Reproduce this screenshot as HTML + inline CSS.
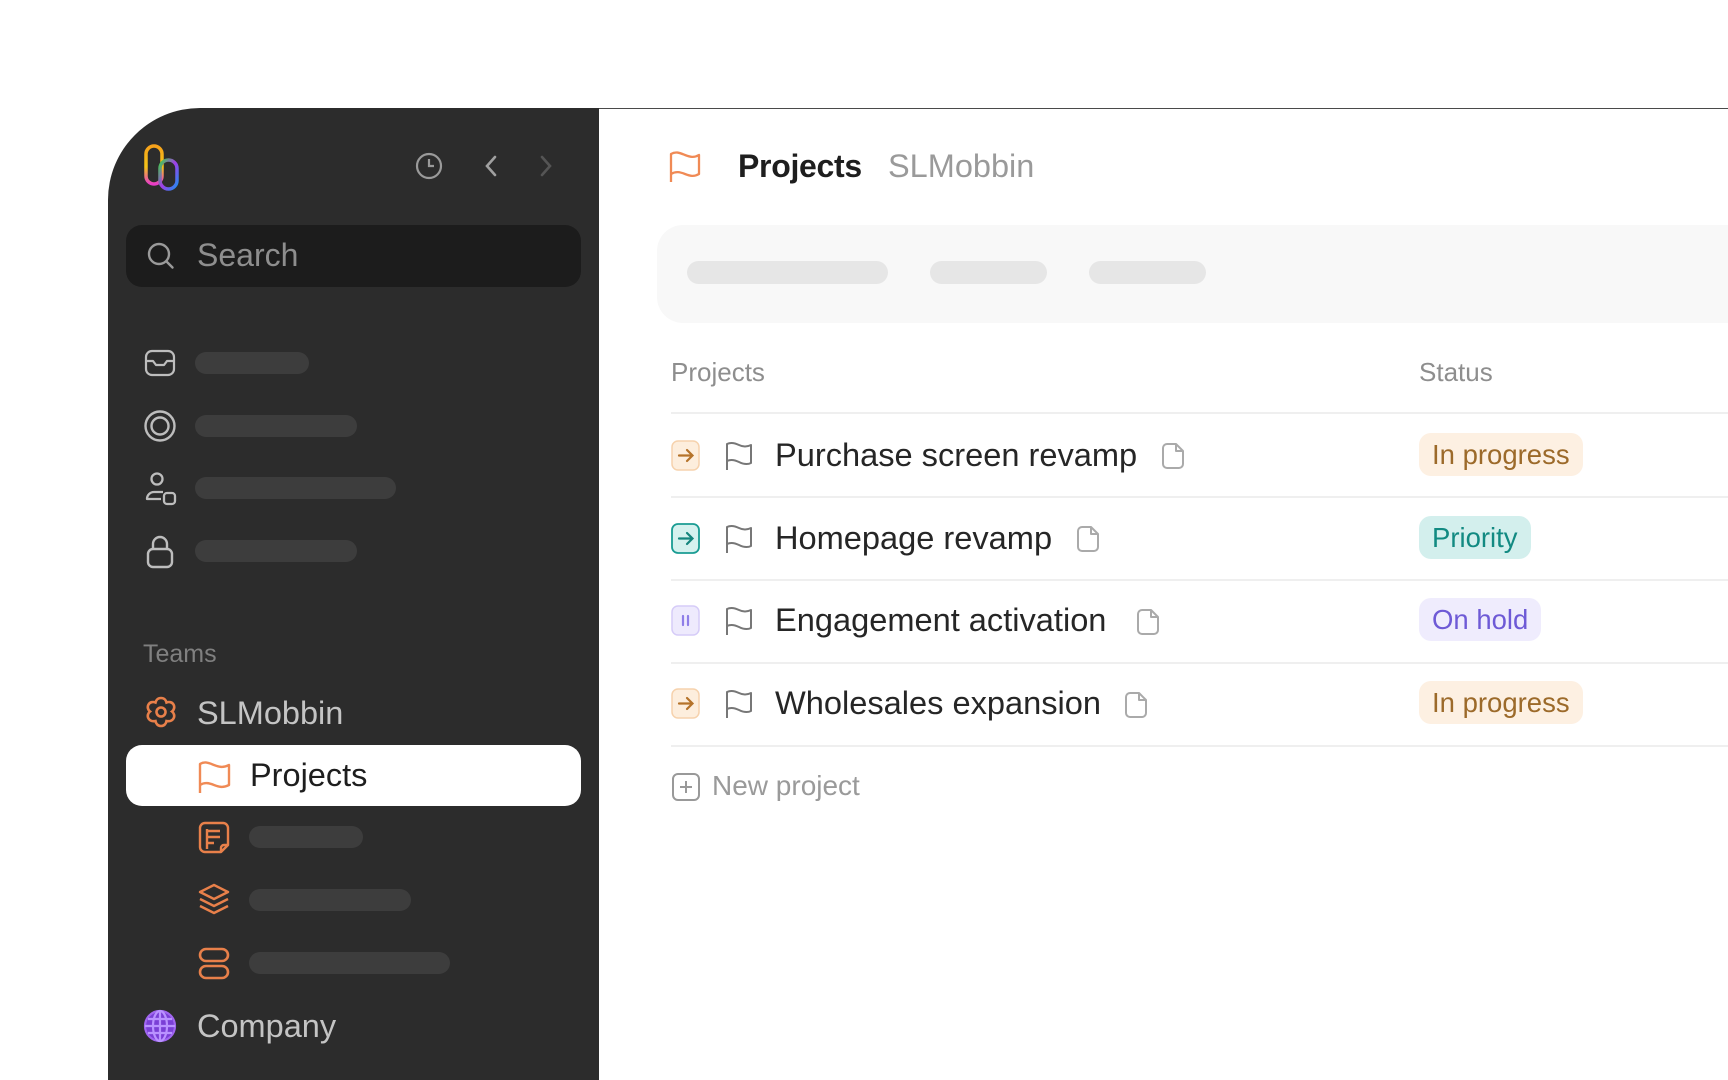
<!DOCTYPE html>
<html><head><meta charset="utf-8"><style>
*{margin:0;padding:0;box-sizing:border-box}
body{width:1728px;height:1080px;background:#fff;position:relative;overflow:hidden;font-family:"Liberation Sans",sans-serif}
.side{position:absolute;left:108px;top:108px;width:491px;height:972px;background:#2c2c2c;border-top-left-radius:92px}
.main{position:absolute;left:599px;top:108px;right:0;bottom:0;background:#fff;border-top:1.5px solid #4a4a4a}
.a{position:absolute}
.bar{position:absolute;height:22px;border-radius:11px;background:#3d3d3d}
.lbar{position:absolute;height:23px;border-radius:12px;background:#e6e6e6}
.txt{position:absolute;white-space:nowrap}
.line{position:absolute;left:671px;right:0;height:2px;background:#efefef}
.badge{position:absolute;left:1419px;height:43px;border-radius:12px;font-size:27.5px;line-height:43px;padding:0 13px}
.row{font-size:32.6px;color:#262626}
</style></head><body>
<div class="side"></div>
<div class="main"></div>
<svg class="a" style="left:140px;top:142px" width="42" height="50" viewBox="0 0 42 50">
<defs><linearGradient id="g1" x1="0" y1="0" x2="0" y2="1"><stop offset="0" stop-color="#f7a21b"/><stop offset=".55" stop-color="#f5c518"/><stop offset="1" stop-color="#e83cc8"/></linearGradient>
<linearGradient id="g2" x1="0" y1="0" x2="1" y2="1"><stop offset="0" stop-color="#3fcf4a"/><stop offset=".5" stop-color="#a23de8"/><stop offset="1" stop-color="#1d8ff0"/></linearGradient></defs>
<rect x="6" y="4" width="16" height="38" rx="8" fill="none" stroke="url(#g1)" stroke-width="3.5"/>
<rect x="20" y="18" width="17" height="29" rx="8.5" fill="none" stroke="url(#g2)" stroke-width="3.5"/>
</svg>
<svg class="a" style="left:414px;top:151px" width="30" height="30" viewBox="0 0 30 30" fill="none" stroke="#9a9a9a" stroke-width="2.2"><circle cx="15" cy="15" r="12"/><path d="M15 8v7h5"/></svg>
<svg class="a" style="left:480px;top:151px" width="22" height="30" viewBox="0 0 22 30" fill="none" stroke="#a0a0a0" stroke-width="2.6" stroke-linecap="round"><path d="M15 6l-8 9 8 9"/></svg>
<svg class="a" style="left:535px;top:151px" width="22" height="30" viewBox="0 0 22 30" fill="none" stroke="#555" stroke-width="2.6" stroke-linecap="round"><path d="M7 6l8 9-8 9"/></svg>
<div class="a" style="left:126px;top:225px;width:455px;height:62px;border-radius:16px;background:#1c1c1c"></div>
<svg class="a" style="left:145px;top:240px" width="32" height="32" viewBox="0 0 32 32" fill="none" stroke="#9a9a9a" stroke-width="2.4" stroke-linecap="round"><circle cx="14" cy="14" r="10"/><path d="M21.5 21.5l6 6"/></svg>
<div class="txt" style="left:197px;top:237px;font-size:32px;color:#8e8e8e">Search</div>
<svg class="a" style="left:144px;top:348px" width="32" height="30" viewBox="0 0 32 30" fill="none" stroke="#bdbdbd" stroke-width="2.2" stroke-linejoin="round"><rect x="2" y="3" width="28" height="24" rx="6"/><path d="M2 13h7l3 4h8l3-4h7"/></svg>
<svg class="a" style="left:143px;top:409px" width="34" height="34" viewBox="0 0 34 34" fill="none" stroke="#bdbdbd" stroke-width="2.4"><circle cx="17" cy="17" r="14.5"/><circle cx="17" cy="17" r="8.5"/></svg>
<svg class="a" style="left:144px;top:471px" width="34" height="36" viewBox="0 0 34 36" fill="none" stroke="#bdbdbd" stroke-width="2.3" stroke-linejoin="round"><circle cx="13" cy="8" r="5.5"/><path d="M19 21H10a7 7 0 0 0-7 7h14"/><rect x="20" y="22" width="11" height="11" rx="3"/></svg>
<svg class="a" style="left:145px;top:534px" width="30" height="36" viewBox="0 0 30 36" fill="none" stroke="#bdbdbd" stroke-width="2.4"><path d="M8 15V10a7 7 0 0 1 14 0v5"/><rect x="3" y="15" width="24" height="18" rx="5"/></svg>
<div class="bar" style="left:195px;top:352px;width:114px"></div>
<div class="bar" style="left:195px;top:415px;width:162px"></div>
<div class="bar" style="left:195px;top:477px;width:201px"></div>
<div class="bar" style="left:195px;top:540px;width:162px"></div>
<div class="txt" style="left:143px;top:640px;font-size:25px;color:#808080">Teams</div>
<svg class="a" style="left:143px;top:695px" width="36" height="36" viewBox="0 0 36 36" fill="none" stroke="#e8804a" stroke-width="2.6"><path d="M18 3c3 0 5 2 5.5 4.5C26 6.5 29 7 30.5 9.5S31 15 29 16.5c2 1.5 3 4.5 1.5 7S26 26.5 23.5 26C23 29 21 31 18 31s-5-2-5.5-5c-2.5.5-5.5 0-7-2.5S5 18 7 16.5C5 15 4 12 5.5 9.5S10 6.5 12.5 7.5C13 5 15 3 18 3z"/><circle cx="18" cy="17" r="4.5"/></svg>
<div class="txt" style="left:197px;top:695px;font-size:32.5px;color:#c4c4c4">SLMobbin</div>
<div class="a" style="left:126px;top:745px;width:455px;height:61px;border-radius:16px;background:#fff"></div>
<svg class="a" style="left:197px;top:760px" width="36" height="34" viewBox="0 0 36 34" fill="none" stroke="#f08a55" stroke-width="2.4" stroke-linejoin="round"><path d="M3 33V4c5-3 9-1 14 1s9 3 15 0v20c-6 3-10 2-15 0s-9-3-14 0"/></svg>
<div class="txt" style="left:250px;top:757px;font-size:32.5px;color:#1e1e1e">Projects</div>
<svg class="a" style="left:197px;top:820px" width="34" height="36" viewBox="0 0 34 36" fill="none" stroke="#e8804a" stroke-width="2.4" stroke-linejoin="round"><path d="M24 32H8a5 5 0 0 1-5-5V8a5 5 0 0 1 5-5h18a5 5 0 0 1 5 5v17zM24 32v-4a3 3 0 0 1 3-3h4"/><path d="M10 11h13M10 17h13M10 23h7M10 9v20"/></svg>
<svg class="a" style="left:196px;top:882px" width="36" height="36" viewBox="0 0 36 36" fill="none" stroke="#e8804a" stroke-width="2.4" stroke-linejoin="round"><path d="M18 3l14 7-14 7-14-7z"/><path d="M4 17l14 7 14-7M4 24l14 7 14-7"/></svg>
<svg class="a" style="left:197px;top:945px" width="34" height="36" viewBox="0 0 34 36" fill="none" stroke="#e8804a" stroke-width="2.6"><rect x="3" y="4" width="28" height="12" rx="6"/><rect x="3" y="21" width="28" height="12" rx="6"/></svg>
<div class="bar" style="left:249px;top:826px;width:114px"></div>
<div class="bar" style="left:249px;top:889px;width:162px"></div>
<div class="bar" style="left:249px;top:952px;width:201px"></div>
<svg class="a" style="left:143px;top:1009px" width="34" height="34" viewBox="0 0 34 34" fill="#8a4be0" stroke="#a065f0" stroke-width="2.2"><circle cx="17" cy="17" r="15" fill="#7a3fd6"/><g fill="none" stroke="#b992ff"><ellipse cx="17" cy="17" rx="7" ry="15"/><path d="M2 17h30M5 10h24M5 24h24M17 2v30"/></g></svg>
<div class="txt" style="left:197px;top:1008px;font-size:32.5px;color:#c4c4c4">Company</div>
<svg class="a" style="left:668px;top:150px" width="34" height="34" viewBox="0 0 34 34" fill="none" stroke="#f08a55" stroke-width="2.3" stroke-linejoin="round"><path d="M3 32V4c5-3 9-1 14 1s9 3 14 0v19c-5 3-9 2-14 0s-9-3-14 0"/></svg>
<div class="txt" style="left:738px;top:148px;font-size:32px;color:#1e1e1e;font-weight:bold;letter-spacing:-0.3px">Projects</div>
<div class="txt" style="left:888px;top:148px;font-size:32.5px;color:#9a9a9a">SLMobbin</div>
<div class="a" style="left:657px;top:225px;right:0;height:98px;border-radius:26px 0 0 26px;background:#f8f8f8"></div>
<div class="lbar" style="left:687px;top:261px;width:201px"></div>
<div class="lbar" style="left:930px;top:261px;width:117px"></div>
<div class="lbar" style="left:1089px;top:261px;width:117px"></div>
<div class="txt" style="left:671px;top:357px;font-size:26px;color:#8e8e8e">Projects</div>
<div class="txt" style="left:1419px;top:357px;font-size:26px;color:#8e8e8e">Status</div>
<div class="line" style="top:412px"></div>
<div class="line" style="top:496px"></div>
<div class="line" style="top:579px"></div>
<div class="line" style="top:662px"></div>
<div class="line" style="top:745px"></div>
<svg class="a" style="left:671px;top:440px" width="30" height="32" viewBox="0 0 30 32"><rect x="1" y="1" width="27" height="29" rx="6" fill="#fdeedd" stroke="#f6d2ad" stroke-width="1.5"/><path d="M8 15.5h13M16 10l5.5 5.5L16 21" fill="none" stroke="#b5732a" stroke-width="2.2" stroke-linecap="round"/></svg>
<svg class="a" style="left:671px;top:523px" width="30" height="32" viewBox="0 0 30 32"><rect x="1" y="1" width="27" height="29" rx="6" fill="#d5f1ee" stroke="#1a9c93" stroke-width="1.8"/><path d="M8 15.5h13M16 10l5.5 5.5L16 21" fill="none" stroke="#15857d" stroke-width="2.2" stroke-linecap="round"/></svg>
<svg class="a" style="left:671px;top:605px" width="30" height="32" viewBox="0 0 30 32"><rect x="1" y="1" width="27" height="29" rx="6" fill="#eeeafd" stroke="#d6ccf8" stroke-width="1.5"/><path d="M12 11v9M17 11v9" fill="none" stroke="#8f7ee8" stroke-width="2.2" stroke-linecap="round"/></svg>
<svg class="a" style="left:671px;top:688px" width="30" height="32" viewBox="0 0 30 32"><rect x="1" y="1" width="27" height="29" rx="6" fill="#fdeedd" stroke="#f6d2ad" stroke-width="1.5"/><path d="M8 15.5h13M16 10l5.5 5.5L16 21" fill="none" stroke="#b5732a" stroke-width="2.2" stroke-linecap="round"/></svg>
<svg class="a" style="left:724px;top:440px" width="30" height="32" viewBox="0 0 30 32" fill="none" stroke="#777" stroke-width="2" stroke-linejoin="round"><path d="M3 30V4c4-2 8-1 12 1s8 2 12 0v18c-4 2-8 1-12-1s-8-3-12-1"/></svg>
<svg class="a" style="left:724px;top:523px" width="30" height="32" viewBox="0 0 30 32" fill="none" stroke="#777" stroke-width="2" stroke-linejoin="round"><path d="M3 30V4c4-2 8-1 12 1s8 2 12 0v18c-4 2-8 1-12-1s-8-3-12-1"/></svg>
<svg class="a" style="left:724px;top:605px" width="30" height="32" viewBox="0 0 30 32" fill="none" stroke="#777" stroke-width="2" stroke-linejoin="round"><path d="M3 30V4c4-2 8-1 12 1s8 2 12 0v18c-4 2-8 1-12-1s-8-3-12-1"/></svg>
<svg class="a" style="left:724px;top:688px" width="30" height="32" viewBox="0 0 30 32" fill="none" stroke="#777" stroke-width="2" stroke-linejoin="round"><path d="M3 30V4c4-2 8-1 12 1s8 2 12 0v18c-4 2-8 1-12-1s-8-3-12-1"/></svg>
<div class="txt row" style="left:775px;top:436px">Purchase screen revamp</div>
<div class="txt row" style="left:775px;top:519px">Homepage revamp</div>
<div class="txt row" style="left:775px;top:601px">Engagement activation</div>
<div class="txt row" style="left:775px;top:684px">Wholesales expansion</div>
<svg class="a" style="left:1161px;top:442px" width="24" height="28" viewBox="0 0 24 28" fill="none" stroke="#aaa" stroke-width="2" stroke-linejoin="round"><path d="M6 2h9l7 7v13a4 4 0 0 1-4 4H6a4 4 0 0 1-4-4V6a4 4 0 0 1 4-4zM15 2v7h7"/></svg>
<svg class="a" style="left:1076px;top:525px" width="24" height="28" viewBox="0 0 24 28" fill="none" stroke="#aaa" stroke-width="2" stroke-linejoin="round"><path d="M6 2h9l7 7v13a4 4 0 0 1-4 4H6a4 4 0 0 1-4-4V6a4 4 0 0 1 4-4zM15 2v7h7"/></svg>
<svg class="a" style="left:1136px;top:608px" width="24" height="28" viewBox="0 0 24 28" fill="none" stroke="#aaa" stroke-width="2" stroke-linejoin="round"><path d="M6 2h9l7 7v13a4 4 0 0 1-4 4H6a4 4 0 0 1-4-4V6a4 4 0 0 1 4-4zM15 2v7h7"/></svg>
<svg class="a" style="left:1124px;top:691px" width="24" height="28" viewBox="0 0 24 28" fill="none" stroke="#aaa" stroke-width="2" stroke-linejoin="round"><path d="M6 2h9l7 7v13a4 4 0 0 1-4 4H6a4 4 0 0 1-4-4V6a4 4 0 0 1 4-4zM15 2v7h7"/></svg>
<div class="badge" style="top:433px;background:#fdf0e2;color:#9c6a2a">In progress</div>
<div class="badge" style="top:516px;background:#d3efed;color:#128a82">Priority</div>
<div class="badge" style="top:598px;background:#efecfd;color:#6e5ad6">On hold</div>
<div class="badge" style="top:681px;background:#fdf0e2;color:#9c6a2a">In progress</div>
<svg class="a" style="left:671px;top:772px" width="30" height="30" viewBox="0 0 30 30" fill="none" stroke="#999" stroke-width="2"><rect x="2" y="2" width="26" height="26" rx="5"/><path d="M15 9v12M9 15h12"/></svg>
<div class="txt" style="left:712px;top:770px;font-size:28px;color:#9a9a9a">New project</div>
</body></html>
